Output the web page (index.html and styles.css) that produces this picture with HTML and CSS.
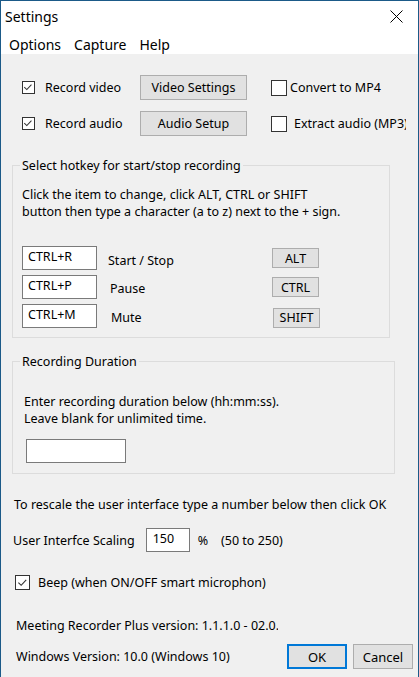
FILE: index.html
```html
<!DOCTYPE html>
<html>
<head>
<meta charset="utf-8">
<title>Settings</title>
<link rel="stylesheet" href="styles.css">
</head>
<body>
<div class="window">
  <div class="titlebar">
    <span class="title">Settings</span>
    <svg class="close" width="13" height="13" viewBox="0 0 13 13"><path d="M0.5 0.5 L12.5 12.5 M12.5 0.5 L0.5 12.5" stroke="#000" stroke-width="1" fill="none"/></svg>
  </div>
  <div class="menubar">
    <span class="menu-item">Options</span>
    <span class="menu-item">Capture</span>
    <span class="menu-item">Help</span>
  </div>
  <div class="content">
    <div class="opt-row">
      <label class="chk left-col"><span class="box small"><svg viewBox="0 0 13 13" width="11" height="11"><path d="M1.5 6 L4.5 9 L10 3" stroke="#333" stroke-width="1.2" fill="none"/></svg></span>Record video</label>
      <button class="btn wide">Video Settings</button>
      <label class="chk right-col"><span class="box big"></span><span class="lbl near">Convert to MP4</span></label>
    </div>
    <div class="opt-row second">
      <label class="chk left-col"><span class="box small"><svg viewBox="0 0 13 13" width="11" height="11"><path d="M1.5 6 L4.5 9 L10 3" stroke="#333" stroke-width="1.2" fill="none"/></svg></span>Record audio</label>
      <button class="btn wide">Audio Setup</button>
      <label class="chk right-col"><span class="box big"></span><span class="lbl far clip">Extract audio (MP3)</span></label>
    </div>

    <fieldset class="group g1">
      <legend>Select hotkey for start/stop recording</legend>
      <p class="hint">Click the item to change, click ALT, CTRL or SHIFT<br>button then type a character (a to z) next to the + sign.</p>
      <div class="hk-rows">
        <div class="hk-row">
          <div class="field">CTRL+R</div>
          <span class="hk-label l1">Start / Stop</span>
          <button class="btn mod">ALT</button>
        </div>
        <div class="hk-row">
          <div class="field">CTRL+P</div>
          <span class="hk-label l2">Pause</span>
          <button class="btn mod">CTRL</button>
        </div>
        <div class="hk-row">
          <div class="field">CTRL+M</div>
          <span class="hk-label l3">Mute</span>
          <button class="btn mod shift">SHIFT</button>
        </div>
      </div>
    </fieldset>

    <fieldset class="group g2">
      <legend>Recording Duration</legend>
      <p class="hint2">Enter recording duration below (hh:mm:ss).<br>Leave blank for unlimited time.</p>
      <div class="field duration"></div>
    </fieldset>

    <p class="rescale">To rescale the user interface type a number below then click OK</p>
    <div class="scale-row">
      <span>User Interfce Scaling</span>
      <div class="field scale">150</div>
      <span class="pct">%</span>
      <span class="range">(50 to 250)</span>
    </div>

    <label class="chk beep"><span class="box mid"><svg viewBox="0 0 13 13" width="12" height="12"><path d="M1.5 6 L4.5 9 L10 3" stroke="#333" stroke-width="1.2" fill="none"/></svg></span>Beep (when ON/OFF smart microphon)</label>

    <p class="version">Meeting Recorder Plus version: 1.1.1.0 - 02.0.0</p>
    <div class="footer">
      <span class="winver">Windows Version: 10.0 (Windows 10)</span>
      <div class="actions">
        <button class="btn act ok">OK</button>
        <button class="btn act">Cancel</button>
      </div>
    </div>
  </div>
</div>
</body>
</html>
```
FILE: styles.css
```css
html, body {
  margin: 0;
  padding: 0;
}
body {
  width: 419px;
  height: 677px;
  overflow: hidden;
  font-family: "Noto Sans", "Open Sans", sans-serif;
  font-size: 12.5px;
  color: #000;
}
.window {
  box-sizing: border-box;
  width: 419px;
  height: 677px;
  border: 1px solid #1b5a88;
  border-bottom: none;
  display: flex;
  flex-direction: column;
  background: #f0f0f0;
}
.titlebar {
  height: 30px;
  background: #fff;
  display: flex;
  align-items: center;
  justify-content: space-between;
  padding: 0 15px 0 4px;
}
.title {
  font-size: 14px;
  line-height: 18px;
  padding-top: 1px;
}
.close {
  display: block;
  margin-top: 1px;
}
.menubar {
  box-sizing: border-box;
  height: 23px;
  background: #fff;
  display: flex;
  align-items: center;
  gap: 13px;
  padding: 3px 0 0 8px;
  font-size: 14px;
}
.content {
  flex: 1;
  display: flex;
  flex-direction: column;
  padding-top: 21px;
}
p { margin: 0; }

.opt-row {
  display: flex;
  align-items: center;
  height: 25px;
  margin-left: 21px;
}
.opt-row.second { margin-top: 11px; }
.chk {
  display: flex;
  align-items: center;
  line-height: 17px;
}
.left-col { width: 118px; }
.box {
  box-sizing: border-box;
  border: 1px solid #333;
  background: #fff;
  display: flex;
  align-items: center;
  justify-content: center;
  flex: none;
}
.box.small { width: 13px; height: 13px; margin-right: 10px; }
.box.big { width: 16px; height: 16px; }
.box.mid { width: 15px; height: 15px; margin-right: 8px; }
.box svg { display: block; }
.right-col { margin-left: 24px; }
.lbl.near { margin-left: 3px; }
.lbl.far { margin-left: 7px; }
.clip {
  width: 112px;
  overflow: hidden;
  white-space: nowrap;
}
.btn {
  box-sizing: border-box;
  font-family: inherit;
  font-size: 12.5px;
  color: #000;
  background: #e1e1e1;
  border: 1px solid #adadad;
  padding: 0;
  margin: 0;
}
.btn.wide { width: 107px; height: 25px; }

.group {
  box-sizing: border-box;
  margin: 0 0 0 11px;
  border: 1px solid #dcdcdc;
  padding: 0 8px 9px 9px;
  min-width: 0;
}
.group legend {
  padding: 0 2px;
  margin-left: -2px;
  line-height: 17px;
}
.g1 {
  width: 378px;
  margin-top: 21px;
}
.hint {
  line-height: 17px;
  padding-top: 12px;
  margin-bottom: 26px;
}
.hk-rows {
  display: flex;
  flex-direction: column;
  gap: 5px;
}
.hk-row {
  display: grid;
  grid-template-columns: 75px 175px 47px;
  align-items: center;
  height: 24px;
}
.field {
  box-sizing: border-box;
  height: 24px;
  background: #fff;
  border: 1px solid #7a7a7a;
  padding: 0 5px;
  line-height: 20px;
}
.hk-label { padding-top: 5px; line-height: 17px; }
.hk-label.l1 { padding-left: 11px; }
.hk-label.l2 { padding-left: 13px; padding-top: 3px; }
.hk-label.l3 { padding-left: 14px; padding-top: 3px; }
.btn.mod { width: 47px; height: 20px; line-height: 17px; }
.btn.mod.shift { margin-left: 1px; margin-top: 3px; }

.g2 {
  width: 383px;
  margin-top: 15px;
  padding-bottom: 10px;
}
.hint2 {
  line-height: 17px;
  padding-top: 23px;
  margin-left: 2px;
  margin-bottom: 12px;
}
.field.duration {
  width: 100px;
  margin-left: 4px;
}

.rescale {
  line-height: 17px;
  margin: 22px 0 0 13px;
}
.scale-row {
  display: flex;
  align-items: center;
  margin: 15px 0 0 12px;
  line-height: 17px;
}
.field.scale {
  width: 44px;
  margin-left: 11px;
  padding-left: 6px;
}
.pct { margin-left: 8px; }
.range { margin-left: 13px; }

.beep {
  margin: 22px 0 0 14px;
}

.version {
  line-height: 17px;
  margin: 26px 0 0 15px;
  width: 262px;
  overflow: hidden;
  white-space: nowrap;
}
.footer {
  display: flex;
  align-items: center;
  margin: 10px 0 0 15px;
  height: 25px;
}
.winver { line-height: 17px; }
.actions {
  margin-left: auto;
  margin-right: 5px;
  display: flex;
  gap: 6px;
}
.btn.act {
  width: 60px;
  height: 25px;
  font-size: 13px;
}
.btn.ok {
  border: 2px solid #0078d7;
}
```
